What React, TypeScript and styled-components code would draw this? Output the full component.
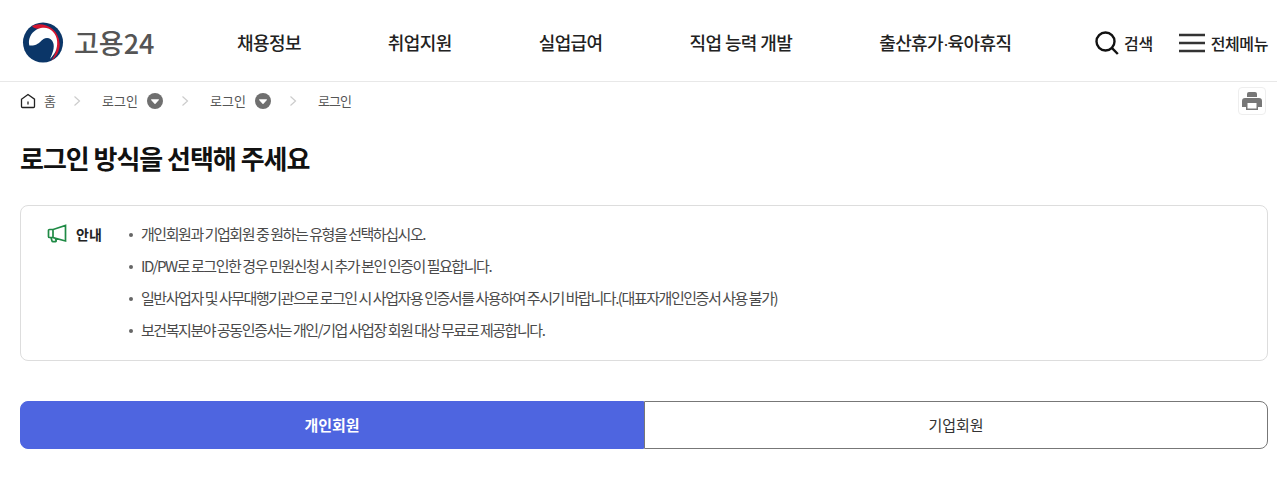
import React from "react";
import styled, { createGlobalStyle } from "styled-components";

const GlobalStyle = createGlobalStyle`
  html, body {
    margin: 0;
    padding: 0;
    background: #fff;
    font-family: "Noto Sans CJK KR", "Noto Sans", sans-serif;
    overflow: hidden;
  }
  ul { margin: 0; padding: 0; list-style: none; }
`;

const Header = styled.header`
  box-sizing: border-box;
  height: 82px;
  border-bottom: 1px solid #e8e8e8;
  display: flex;
  align-items: center;
  padding: 4px 9px 0 22px;
`;

const Logo = styled.a`
  display: flex;
  align-items: center;
  gap: 10px;
  width: 215px;
  flex: none;
`;

const LogoText = styled.span`
  font-size: 27px;
  font-weight: 500;
  color: #555;
  letter-spacing: 0;
  line-height: 1;
`;

const Nav = styled.nav`
  flex: 1;
  display: flex;
  gap: 87px;
  padding-bottom: 2px;
  font-size: 18px;
  font-weight: 500;
  letter-spacing: -0.6px;
  color: #222;
`;

const NavDot = styled.span`
  font-family: "Liberation Sans", sans-serif;
  letter-spacing: -1.5px;
`;

const Utils = styled.div`
  display: flex;
  align-items: center;
  gap: 26px;
`;

const UtilButton = styled.button<{ $gap: number }>`
  display: flex;
  align-items: center;
  gap: ${(p) => p.$gap}px;
  border: 0;
  padding: 0;
  background: none;
  font: 500 16px "Noto Sans CJK KR", sans-serif;
  letter-spacing: -0.4px;
  color: #222;
`;

const Crumbs = styled.div`
  height: 38px;
  padding: 0 11px 0 20px;
  display: flex;
  align-items: center;
`;

const Crumb = styled.span<{ $width: number; $gap?: number; $spacing?: number }>`
  display: flex;
  align-items: center;
  gap: ${(p) => p.$gap ?? 9}px;
  width: ${(p) => p.$width}px;
  font-size: 13px;
  letter-spacing: ${(p) => p.$spacing ?? 0}px;
  color: #555;
`;

const CrumbLabel = styled.span`
  padding-bottom: 2px;
`;

const Chevron = styled.svg`
  width: 8px;
  height: 12px;
  flex: none;
  margin-right: 21px;
`;

const PrintButton = styled.button`
  margin-left: auto;
  width: 28px;
  height: 28px;
  border: 1px solid #eee;
  border-radius: 4px;
  background: #fff;
  padding: 0;
  display: flex;
  align-items: center;
  justify-content: center;
`;

const Main = styled.main`
  padding: 0 9px 0 20px;
`;

const Title = styled.h1`
  margin: 18px 0 27px;
  font-size: 26px;
  line-height: 40px;
  font-weight: 700;
  letter-spacing: -1.03px;
  color: #111;
`;

const Notice = styled.section`
  height: 156px;
  box-sizing: border-box;
  border: 1px solid #ddd;
  border-radius: 8px;
  padding: 12px 26px;
  display: flex;
`;

const NoticeLabel = styled.div`
  width: 81px;
  flex: none;
  display: flex;
  align-items: center;
  gap: 9px;
  height: 32px;
  font-size: 14px;
  font-weight: 700;
  letter-spacing: 0;
  color: #222;
`;

const NoticeItem = styled.li`
  height: 32px;
  line-height: 32px;
  font-size: 15px;
  letter-spacing: -1.45px;
  color: #4a4a4a;
  padding-left: 13px;
  position: relative;

  &::before {
    content: "";
    position: absolute;
    left: 1px;
    top: 15px;
    width: 4px;
    height: 4px;
    border-radius: 50%;
    background: #666;
  }
`;

const Tabs = styled.div`
  margin-top: 40px;
  height: 48px;
  display: grid;
  grid-template-columns: 1fr 1fr;
`;

const Tab = styled.button<{ $active?: boolean }>`
  border: 1px solid ${(p) => (p.$active ? "#4e65e0" : "#777")};
  border-radius: ${(p) => (p.$active ? "8px 0 0 8px" : "0 8px 8px 0")};
  background: ${(p) => (p.$active ? "#4e65e0" : "#fff")};
  color: ${(p) => (p.$active ? "#fff" : "#333")};
  font: ${(p) => (p.$active ? 700 : 400)} 15px "Noto Sans CJK KR", sans-serif;
  letter-spacing: -0.05px;
  padding: 0 0 2px;
`;

const notices = [
  "개인회원과 기업회원 중 원하는 유형을 선택하십시오.",
  "ID/PW로 로그인한 경우 민원신청 시 추가 본인 인증이 필요합니다.",
  "일반사업자 및 사무대행기관으로 로그인 시 사업자용 인증서를 사용하여 주시기 바랍니다.(대표자개인인증서 사용 불가)",
  "보건복지분야 공동인증서는 개인/기업 사업장 회원 대상 무료로 제공합니다.",
];

const Emblem = () => (
  <svg width="42" height="41" viewBox="0 0 42 42">
    <circle cx="21" cy="21" r="20.5" fill="#0b3668" />
    <path d="M9.7 4A20.5 20.5 0 0 1 29.5 39.6C34 33 36 26 35 20 34 11 27 7 21 7 16 7 12 7 9.7 4z" fill="#d5152f" />
    <path d="M7 24C5 14 13 6 22 6 29 6 35 12 35.5 20 36 28 33 33 28 38 31 32 33 26 31.5 21.5 30 16.5 25 15 21.5 17.5 18 20 17 22.5 13 23.5 10 24.3 8 24 7 24z" fill="#fff" />
  </svg>
);

const Home = () => (
  <svg width="16" height="16" viewBox="0 0 16 16" fill="none">
    <path d="M1.5 6.2 8 1.5l6.5 4.7v7.3a1 1 0 0 1-1 1h-11a1 1 0 0 1-1-1z" stroke="#222" strokeWidth="1.3" />
    <path d="M8 8.5v3" stroke="#222" strokeWidth="1.3" />
  </svg>
);

const Arrow = () => (
  <Chevron viewBox="0 0 8 12" fill="none">
    <path d="m1.5 1.5 5 4.5-5 4.5" stroke="#ccc" strokeWidth="1.2" />
  </Chevron>
);

const Dropdown = () => (
  <svg width="16" height="16" viewBox="0 0 16 16">
    <circle cx="8" cy="8" r="8" fill="#6f6f6f" />
    <path d="M4.6 6.2h6.8a.6.6 0 0 1 .5.9L8.5 10.8a.7.7 0 0 1-1 0L4.1 7.1a.6.6 0 0 1 .5-.9z" fill="#fff" />
  </svg>
);

const App = () => (
  <>
    <GlobalStyle />
    <Header>
      <Logo>
        <Emblem />
        <LogoText>고용24</LogoText>
      </Logo>
      <Nav>
        <span>채용정보</span>
        <span>취업지원</span>
        <span>실업급여</span>
        <span>직업 능력 개발</span>
        <span>
          출산휴가<NavDot>·</NavDot>육아휴직
        </span>
      </Nav>
      <Utils>
        <UtilButton $gap={5}>
          <svg width="24" height="24" viewBox="0 0 24 24" fill="none" stroke="#111" strokeWidth="2.4">
            <circle cx="10.5" cy="10.5" r="9" />
            <path d="m16.8 16.8 6 6.2" />
          </svg>
          검색
        </UtilButton>
        <UtilButton $gap={6}>
          <svg width="26" height="20" viewBox="0 0 26 20" stroke="#333" strokeWidth="2.4">
            <path d="M0 2h26M0 10h26M0 18h26" />
          </svg>
          전체메뉴
        </UtilButton>
      </Utils>
    </Header>
    <Crumbs>
      <Crumb $width={53} $gap={8}>
        <Home />
        <CrumbLabel>홈</CrumbLabel>
      </Crumb>
      <Arrow />
      <Crumb $width={79}>
        <CrumbLabel>로그인</CrumbLabel>
        <Dropdown />
      </Crumb>
      <Arrow />
      <Crumb $width={79}>
        <CrumbLabel>로그인</CrumbLabel>
        <Dropdown />
      </Crumb>
      <Arrow />
      <Crumb $width={40} $spacing={-1}>
        <CrumbLabel>로그인</CrumbLabel>
      </Crumb>
      <PrintButton aria-label="인쇄">
        <svg width="22" height="22" viewBox="0 0 22 22">
          <path d="M6 7V4a2 2 0 0 1 2-2h6a2 2 0 0 1 2 2v3z" fill="#777" />
          <path d="M4 8h14a3 3 0 0 1 3 3v6h-4v3H5v-3H1v-6a3 3 0 0 1 3-3z" fill="#777" />
          <rect x="6.5" y="13" width="9" height="5.5" fill="#fff" />
        </svg>
      </PrintButton>
    </Crumbs>
    <Main>
      <Title>로그인 방식을 선택해 주세요</Title>
      <Notice>
        <NoticeLabel>
          <svg width="20" height="20" viewBox="0 0 20 20" fill="none" stroke="#1f8a45" strokeWidth="1.7">
            <path d="M18.5 1.5V17L6 13.5v-8zM6 5.5H2.5a1 1 0 0 0-1 1v6a1 1 0 0 0 1 1H6M4 13.5l1 3.5a1 1 0 0 0 1 .7h2.5a.7.7 0 0 0 .6-1L8.5 14.5" />
          </svg>
          안내
        </NoticeLabel>
        <ul>
          {notices.map((text) => (
            <NoticeItem key={text}>{text}</NoticeItem>
          ))}
        </ul>
      </Notice>
      <Tabs>
        <Tab $active>개인회원</Tab>
        <Tab>기업회원</Tab>
      </Tabs>
    </Main>
  </>
);

export default App;
